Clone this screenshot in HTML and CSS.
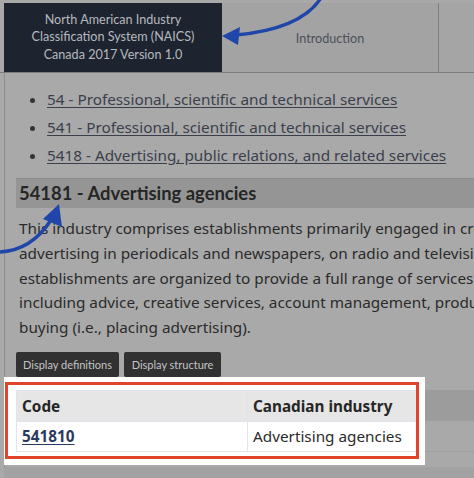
FILE: index.html
```html
<!DOCTYPE html>
<html lang="en">
<head>
<meta charset="utf-8">
<title>54181 - Advertising agencies</title>
<link rel="stylesheet" href="styles.css">
</head>
<body>
<div class="page">
  <div class="tabs">
    <div class="tab tab-active">North American Industry<br>Classification System (NAICS)<br>Canada 2017 Version 1.0</div>
    <div class="tab tab-intro">Introduction</div>
    <div class="tab tab-rest"></div>
  </div>
  <div class="panel">
    <div class="inner">
      <ul class="crumbs">
        <li><a href="#">54 - Professional, scientific and technical services</a></li>
        <li><a href="#">541 - Professional, scientific and technical services</a></li>
        <li><a href="#">5418 - Advertising, public relations, and related services</a></li>
      </ul>
      <h2 class="title">54181 - Advertising agencies</h2>
      <p class="desc">This industry comprises establishments primarily engaged in creating advertising campaigns and placing such<br>advertising in periodicals and newspapers, on radio and television, or other media. These<br>establishments are organized to provide a full range of services (i.e., through in-house capabilities or subcontracting),<br>including advice, creative services, account management, production of advertising material, media planning, and<br>buying (i.e., placing advertising).</p>
      <div class="buttons">
        <button class="btn btn-def">Display definitions</button>
        <button class="btn btn-str">Display structure</button>
      </div>
      <div class="table-row">
        <div class="spot">
          <div class="frame">
            <table class="codes">
              <thead>
                <tr><th class="c1">Code</th><th class="c2">Canadian industry</th></tr>
              </thead>
              <tbody>
                <tr><td class="c1"><a href="#">541810</a></td><td class="c2">Advertising agencies</td></tr>
              </tbody>
            </table>
          </div>
        </div>
        <div class="dim-rest">
          <div class="dim-head"></div>
          <div class="dim-body"></div>
        </div>
      </div>
      <div class="bottom-band"></div>
    </div>
  </div>
</div>
<svg class="arrows" width="474" height="478" viewBox="0 0 474 478">
  <path d="M 321 -2 C 308 18, 280 31, 236 35" fill="none" stroke="#1f46a8" stroke-width="3.4" stroke-linecap="round"/>
  <polygon points="222,36 240,27 238,45" fill="#1f46a8"/>
  <path d="M -3 252 C 20 252, 38 240, 51 220" fill="none" stroke="#1f46a8" stroke-width="3.4" stroke-linecap="round"/>
  <polygon points="59,204 43,219 62,227" fill="#1f46a8"/>
</svg>
</body>
</html>
```

FILE: styles.css
```css
html, body {
  margin: 0;
  padding: 0;
  overflow: hidden;
  background: #a9a9a9;
}
body {
  width: 474px;
  height: 478px;
  position: relative;
  font-family: "Noto Sans", "Open Sans", sans-serif;
}
.page {
  width: 760px;
  padding-top: 3px;
}
.tabs {
  display: flex;
  padding-left: 4px;
  height: 69px;
  border-bottom: 1px solid #7c7c7c;
}
.tab {
  display: flex;
  align-items: center;
  justify-content: center;
  text-align: center;
  font-family: Lato, "Noto Sans", sans-serif;
  font-size: 12.6px;
  line-height: 17.5px;
}
.tab-active {
  width: 218px;
  background: #1d2430;
  color: #b5b9be;
  padding-bottom: 1px;
}
.tab-intro {
  width: 216px;
  background: #a3a3a3;
  color: #4b505a;
  border-right: 1px solid #7d7d7d;
  padding-top: 2px;
}
.tab-rest {
  flex: 1;
  background: #a5a5a5;
}
.panel {
  margin-left: 4px;
  border-left: 1px solid #8e8e8e;
  background: #a9a9a9;
}
.inner {
  padding-left: 11px;
  padding-top: 12px;
}
.crumbs {
  margin: 0;
  padding-left: 31px;
  font-size: 15.3px;
  line-height: 28px;
  color: #333;
}
.crumbs a {
  color: #3b3f4c;
  text-decoration: underline;
  text-underline-offset: 2px;
}
.title {
  margin: 9px 0 0;
  height: 29px;
  border-top: 1px solid #8c8c8c;
  background: #959595;
  padding-left: 3px;
  font-family: Lato, "Noto Sans", sans-serif;
  font-weight: 700;
  font-size: 18.4px;
  line-height: 29px;
  color: #262626;
}
.desc {
  margin: 8px 0 0;
  padding-left: 3px;
  white-space: nowrap;
  font-size: 15.3px;
  line-height: 24.8px;
  color: #2b2b2b;
}
.buttons {
  display: flex;
  gap: 5px;
  margin-top: 12px;
}
.btn {
  height: 25px;
  border: none;
  border-radius: 2px;
  background: #313131;
  color: #c4c4c4;
  font-family: Lato, "Noto Sans", sans-serif;
  font-size: 11px;
  padding: 0;
}
.btn-def { width: 103px; }
.btn-str { width: 97px; }
.table-row {
  display: flex;
  margin-left: -12px;
}
.spot {
  width: 420px;
  height: 83px;
  background: #ffffff;
  padding: 5px 0 0 1px;
}
.frame {
  width: 400px;
  height: 66px;
  border: 3px solid #e0442b;
  padding: 5px 0 0 8px;
  box-sizing: content-box;
  overflow: hidden;
}
.codes {
  border-collapse: collapse;
  width: 560px;
  font-size: 15.3px;
  color: #2a2a2a;
}
.codes th, .codes td {
  text-align: left;
  padding: 0 5px;
  border: 1px solid #e6e1ea;
}
.codes th {
  height: 30px;
  background: #e6e6e6;
  font-weight: 700;
  color: #262626;
}
.codes td {
  height: 29px;
  background: #ffffff;
}
.codes .c1 { width: 220px; }
.codes td a {
  color: #2a3a5e;
  font-weight: 700;
  text-underline-offset: 2px;
}
.dim-rest {
  flex: 1;
  padding-top: 13px;
}
.dim-head {
  height: 31px;
  background: #9c9c9c;
}
.dim-body {
  height: 30px;
  background: #a9a9a9;
  border-bottom: 1px solid #9e9e9e;
}
.bottom-band {
  margin-left: -12px;
  margin-top: 2px;
  height: 20px;
  background: #a2a2a2;
}
.arrows {
  position: absolute;
  left: 0;
  top: 0;
  pointer-events: none;
}
```
